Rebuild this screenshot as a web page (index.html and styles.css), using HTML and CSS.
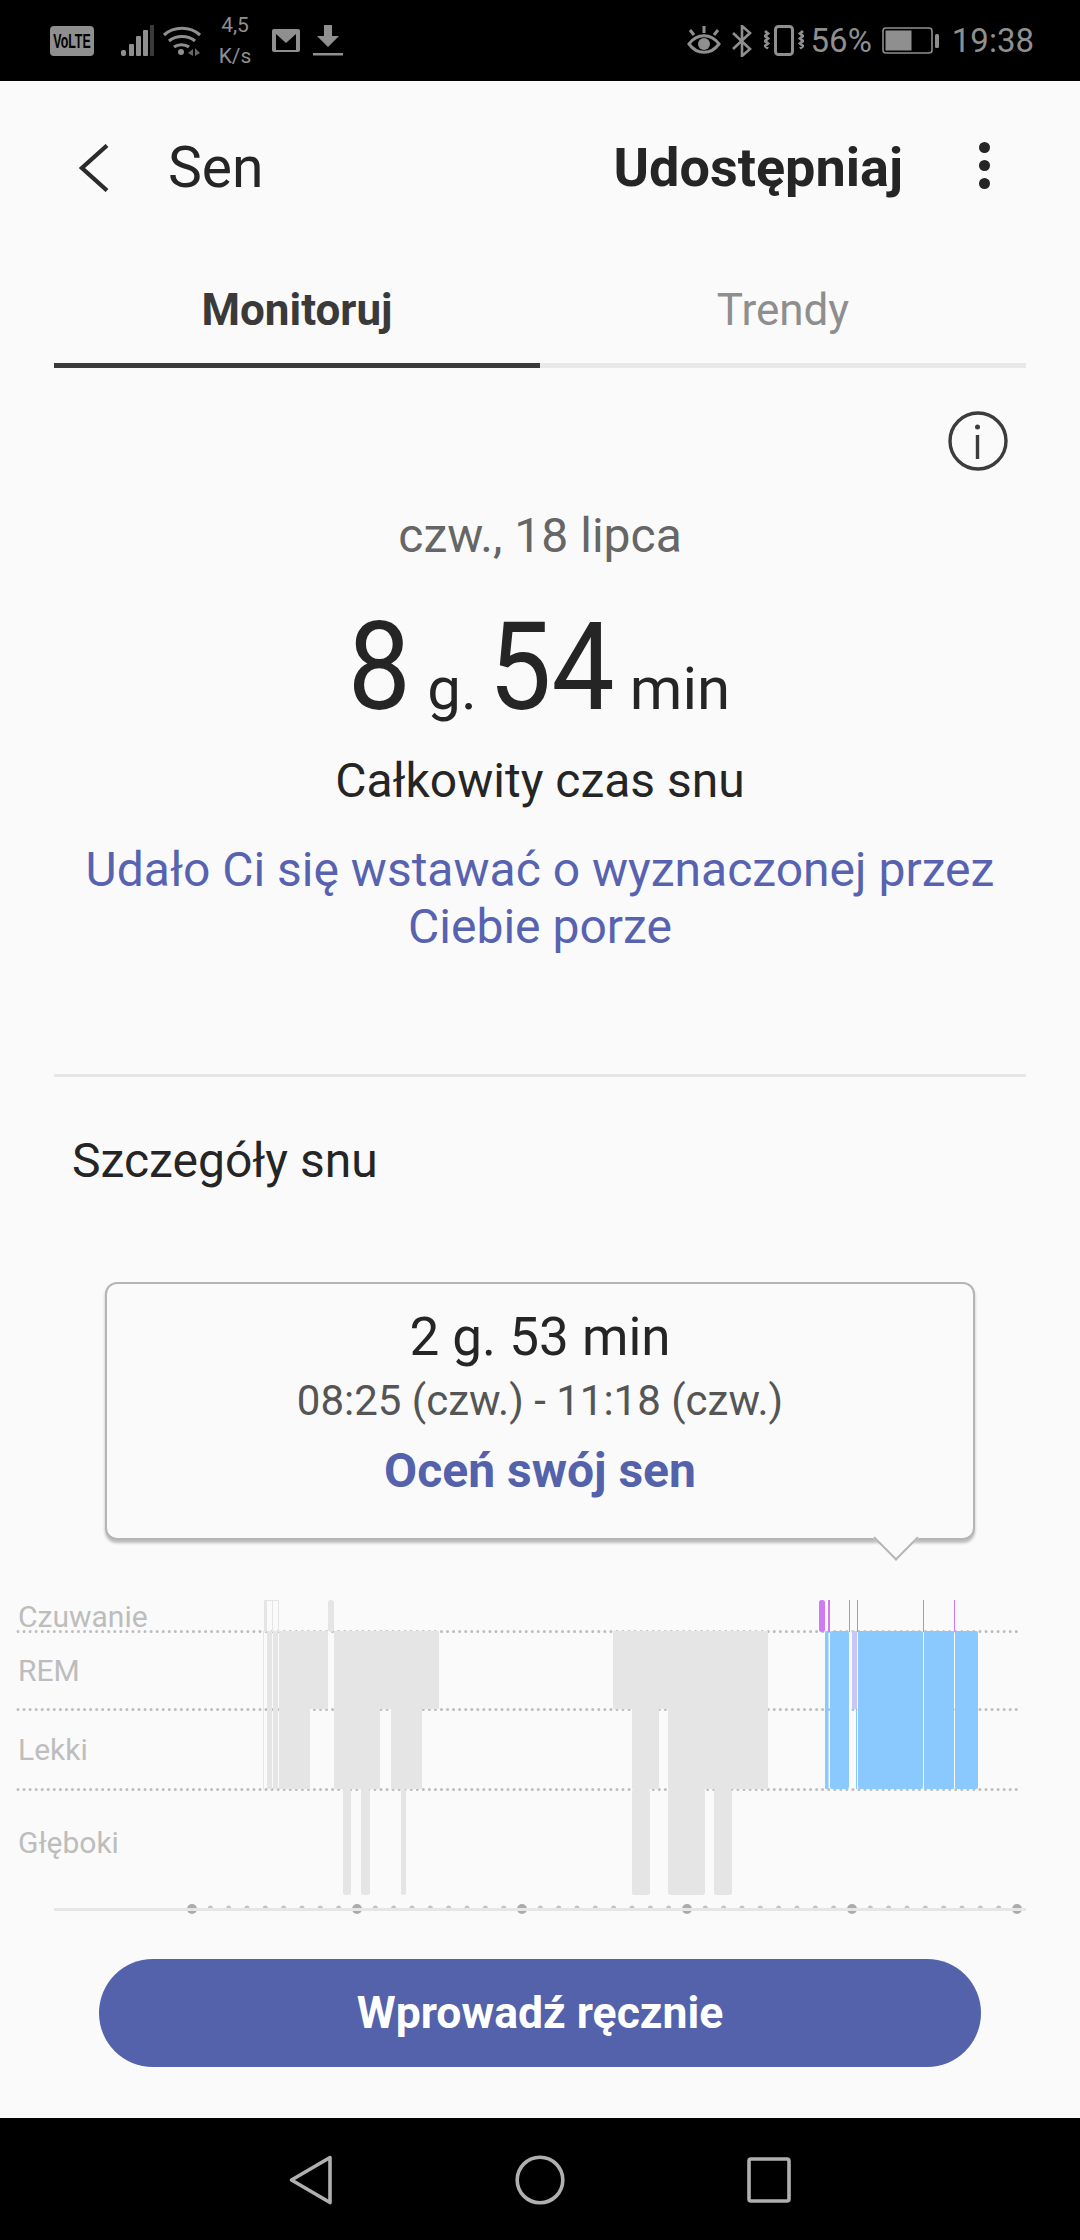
FILE: index.html
```html
<!DOCTYPE html>
<html lang="pl">
<head>
  <meta charset="UTF-8">
  <title>Sen</title>
  <link rel="stylesheet" href="styles.css">
</head>
<body>
  <div class="status-bar">
    <div class="status-left">
      <svg class="ic" width="44" height="30" viewBox="0 0 44 30"><rect width="44" height="30" rx="4" fill="#8f8f8f"/><text x="35.500" y="22" transform="scale(.62 1)" text-anchor="middle" class="volte">VoLTE</text></svg>
      <svg class="ic ic-signal" width="33" height="31" viewBox="0 0 33 31" fill="#8f8f8f"><rect x="0" y="25" width="5" height="6" rx="2"/><rect x="8" y="19" width="5" height="12" rx="1"/><rect x="15" y="11" width="5" height="20" rx="1"/><rect x="22" y="5" width="5" height="26" rx="1"/><rect x="29" y="0" width="4" height="31" fill="#3a3a3a"/></svg>
      <svg class="ic ic-wifi" width="38" height="31" viewBox="0 0 38 31" fill="none" stroke="#8f8f8f" stroke-width="3.2"><path d="M1 10c10-9 26-9 36 0"/><path d="M6 16c7-6 19-6 26 0"/><path d="M11 22c4-3 11-3 15 0"/><circle cx="18" cy="27" r="3" fill="#8f8f8f" stroke="none"/><path d="M25 28l5-4v7zM32 23l5 5-5 3z" fill="#666" stroke="none"/></svg>
      <div class="speed"><span>4,5</span><span>K/s</span></div>
      <svg class="ic ic-mail" width="28" height="23" viewBox="0 0 28 23"><rect width="28" height="23" rx="2" fill="#8f8f8f"/><path d="M4 21V5l10 9 10-9v16" fill="#000"/></svg>
      <svg class="ic ic-down" width="30" height="31" viewBox="0 0 30 31" fill="#8f8f8f"><path d="M11 0h8v11h7L15 22 4 11h7z"/><rect x="0" y="28" width="30" height="2.5"/></svg>
    </div>
    <div class="status-right">
      <svg class="ic" width="34" height="31" viewBox="0 0 34 31" fill="none" stroke="#8f8f8f" stroke-width="3"><path d="M2 19c8-11 22-11 30 0-8 11-22 11-30 0z"/><circle cx="17" cy="19" r="6" fill="#8f8f8f" stroke="none"/><path d="M17 8V1M7 10L3 5M27 10l4-5"/></svg>
      <svg class="ic ic-bt" width="20" height="32" viewBox="0 0 20 32" fill="none" stroke="#8f8f8f" stroke-width="2.6"><path d="M1 8l17 16-8 7V1l8 7L1 24"/></svg>
      <svg class="ic ic-vib" width="40" height="31" viewBox="0 0 40 31" fill="none" stroke="#8f8f8f"><rect x="11.500" y="1.500" width="17" height="28" rx="3" stroke-width="3"/><path d="M1 6l3 2.500-3 2.500 3 2.500-3 2.500 3 2.500-3 2.500 3 2.500M39 6l-3 2.500 3 2.500-3 2.500 3 2.500-3 2.500 3 2.500-3 2.500" stroke-width="2.800"/></svg>
      <span class="status-text pct">56%</span>
      <svg class="ic ic-batt" width="58" height="27" viewBox="0 0 58 27"><rect x="1" y="1" width="49" height="25" rx="3" fill="none" stroke="#8f8f8f" stroke-width="1.6"/><rect x="3.5" y="3.5" width="26" height="20" fill="#8f8f8f"/><rect x="53" y="7" width="4" height="14" rx="1.5" fill="#8f8f8f"/></svg>
      <span class="status-text time">19:38</span>
    </div>
  </div>

  <header class="toolbar">
    <svg class="back" width="30" height="48" viewBox="0 0 30 48" fill="none" stroke="#2b2b2b" stroke-width="4.2"><path d="M28 1.5L3 24l25 22.5"/></svg>
    <span class="toolbar-title">Sen</span>
    <span class="toolbar-share">Udostępniaj</span>
    <div class="more"><i></i><i></i><i></i></div>
  </header>

  <nav class="tabs">
    <div class="tab tab-active">Monitoruj</div>
    <div class="tab">Trendy</div>
  </nav>

  <main class="content">
    <section class="summary">
      <svg class="info" width="60" height="60" viewBox="0 0 60 60" fill="none" stroke="#3c3c3c" stroke-width="3.4"><circle cx="30" cy="30" r="28"/><circle cx="29.500" cy="16" r="2.500" fill="#3c3c3c" stroke="none"/><path d="M29.500 24v24"/></svg>
      <div class="date">czw., 18 lipca</div>
      <div class="total"><b class="hours">8</b> g. <b class="mins">54</b> min</div>
      <div class="total-label">Całkowity czas snu</div>
      <p class="goal">Udało Ci się wstawać o wyznaczonej przez<br>Ciebie porze</p>
    </section>

    <section class="details">
      <h2>Szczegóły snu</h2>
      <div class="popup">
        <div class="popup-time">2 g. 53 min</div>
        <div class="popup-range">08:25 (czw.) - 11:18 (czw.)</div>
        <div class="popup-link">Oceń swój sen</div>
      </div>

      <svg class="chart" width="1080" height="330" viewBox="0 1590 1080 330">
        <g class="chart-label">
          <text x="18" y="1627">Czuwanie</text>
          <text x="18" y="1681">REM</text>
          <text x="18" y="1760">Lekki</text>
          <text x="18" y="1853">Głęboki</text>
        </g>
        <g class="dots">
          <line x1="18" y1="1631.500" x2="1020" y2="1631.500"/>
          <line x1="18" y1="1709.500" x2="1020" y2="1709.500"/>
          <line x1="18" y1="1789.500" x2="1020" y2="1789.500"/>
        </g>
        <g class="seg-grey">
          <rect x="264" y="1600" width="3" height="32" rx="1.500"/>
          <rect x="272" y="1600" width="1" height="32"/>
          <rect x="278" y="1600" width="1" height="32"/>
          <rect x="264" y="1600" width="15" height="1"/>
          <rect x="328" y="1600" width="6" height="32" rx="3"/>
          <rect x="263" y="1631" width="1" height="158"/>
          <rect x="267" y="1631" width="5" height="158"/>
          <rect x="273" y="1631" width="5" height="158"/>
          <path d="M279 1631h49v78h-18v80h-31z"/>
          <path d="M334 1631h105v78h-17v80h-31v-80h-11v80h-46z"/>
          <rect x="343" y="1789" width="8" height="106" rx="2"/>
          <rect x="361" y="1789" width="9" height="106" rx="2"/>
          <rect x="401" y="1789" width="5" height="106" rx="2"/>
          <path d="M613 1631h155v158h-100v-80h-9v80h-27v-80h-19z"/>
          <rect x="632" y="1789" width="18" height="106" rx="2"/>
          <rect x="668" y="1789" width="37" height="106" rx="2"/>
          <rect x="714" y="1789" width="18" height="106" rx="2"/>
        </g>
        <g class="seg-blue">
          <rect x="825" y="1631" width="3.500" height="158" rx="1"/>
          <rect x="830" y="1631" width="19" height="158" rx="2"/>
          <rect x="856" y="1631" width="1" height="158"/>
          <rect x="858" y="1631" width="65" height="158" rx="2"/>
          <rect x="924" y="1631" width="30" height="158" rx="1"/>
          <rect x="955" y="1631" width="23" height="158" rx="2"/>
        </g>
        <rect class="seg-lav" x="852" y="1631" width="5" height="78"/>
        <g class="seg-pink">
          <rect x="819" y="1600" width="6" height="32" rx="2.500"/>
          <rect x="828" y="1600" width="2" height="32"/>
          <rect x="849" y="1600" width="1" height="32"/>
          <rect x="857" y="1600" width="1" height="32"/>
          <rect x="923" y="1600" width="1" height="32"/>
          <rect x="954" y="1600" width="1" height="32"/>
        </g>
        <g class="ticks">
          <line class="ticks-minor" x1="192" y1="1908" x2="1017" y2="1908"/>
          <circle cx="192" cy="1909" r="5"/><circle cx="357" cy="1909" r="5"/><circle cx="522" cy="1909" r="5"/>
          <circle cx="687" cy="1909" r="5"/><circle cx="852" cy="1909" r="5"/><circle cx="1017" cy="1909" r="5"/>
        </g>
        <rect class="axis" x="54" y="1908" width="972" height="3"/>
      </svg>
    </section>

    <div class="action">
      <button class="btn">Wprowadź ręcznie</button>
    </div>
  </main>

  <footer class="nav-bar">
    <svg width="44" height="50" viewBox="0 0 44 50" fill="none" stroke="#b0b0b0" stroke-width="3.600" stroke-linejoin="round"><path d="M41 2.500L2.500 25 41 47.500z"/></svg>
    <svg width="50" height="50" viewBox="0 0 50 50" fill="none" stroke="#b0b0b0" stroke-width="3.600"><circle cx="25" cy="25" r="22.800"/></svg>
    <svg width="44" height="46" viewBox="0 0 44 46" fill="none" stroke="#b0b0b0" stroke-width="3.600"><rect x="2" y="2" width="40" height="42" rx="2"/></svg>
  </footer>
</body>
</html>
```

FILE: styles.css
```css
* {
  box-sizing: border-box;
}
body {
  margin: 0;
  width: 1080px;
  height: 2240px;
  display: flex;
  flex-direction: column;
  overflow: hidden;
  background: #fafafa;
  color: #252525;
  font-family: Roboto, sans-serif;
}
svg {
  display: block;
  flex: none;
}

/* status bar */
.status-bar {
  height: 81px;
  background: #000;
  display: flex;
  justify-content: space-between;
  align-items: center;
  padding: 0 46px 0 50px;
  color: #8f8f8f;
}
.status-left, .status-right {
  display: flex;
  align-items: center;
}
.volte {
  font-family: "Liberation Sans", sans-serif;
  font-size: 20px;
  font-weight: 700;
  fill: #000;
}
.ic-signal { margin-left: 27px; }
.ic-wifi { margin-left: 9px; }
.speed {
  width: 44px;
  margin-left: 12px;
  display: flex;
  flex-direction: column;
  align-items: center;
  font-size: 21px;
  line-height: 31px;
}
.ic-mail { margin-left: 15px; }
.ic-down { margin-left: 13px; }
.ic-bt { margin-left: 11px; }
.ic-vib { margin-left: 12px; }
.status-text {
  font-size: 33px;
  line-height: 40px;
}
.pct { margin-left: 7px; }
.ic-batt { margin-left: 10px; }
.time { margin-left: 12px; }

/* toolbar */
.toolbar {
  height: 173px;
  display: flex;
  align-items: center;
  padding-left: 79px;
}
.toolbar-title {
  margin-left: 59px;
  font-size: 57px;
}
.toolbar-share {
  margin-left: auto;
  font-size: 54px;
  font-weight: 700;
}
.more {
  width: 11px;
  margin: 0 90px 0 76px;
  display: flex;
  flex-direction: column;
  gap: 7px;
  padding-bottom: 4px;
}
.more i {
  width: 11px;
  height: 11px;
  border-radius: 50%;
  background: #252525;
}

/* tabs */
.tabs {
  height: 114px;
  margin: 0 54px;
  display: flex;
}
.tab {
  flex: 1;
  display: flex;
  align-items: center;
  justify-content: center;
  border-bottom: 5px solid #e8e8e8;
  padding-top: 2px;
  font-size: 44px;
  color: #8e8e8e;
}
.tab-active {
  border-bottom-color: #3a3a3a;
  font-weight: 700;
  color: #3a3a3a;
}

.content {
  flex: 1;
  display: flex;
  flex-direction: column;
}

/* summary */
.summary {
  position: relative;
  height: 709px;
  margin: 0 54px;
  border-bottom: 3px solid #e6e6e6;
  padding-top: 140px;
  text-align: center;
}
.info {
  position: absolute;
  top: 43px;
  right: 18px;
}
.date {
  font-size: 48px;
  line-height: 56px;
  color: #666;
}
.total {
  margin-top: 39px;
  font-size: 60px;
  line-height: 130px;
}
/* the digits on the phone are narrower than Roboto */
.total b {
  display: inline-block;
  font-size: 122px;
  font-weight: 400;
  transform: scaleX(0.92);
}
.hours { margin: 0 -1px 0 -5px; }
.mins { margin: 0 -5px 0 -9px; }
.total-label {
  margin-top: -1px;
  font-size: 48px;
  line-height: 56px;
}
.goal {
  margin: 32px 0 0;
  font-size: 48px;
  line-height: 57px;
  color: #5763b0;
}

/* details */
.details {
  flex: 1;
}
.details h2 {
  margin: 0;
  height: 205px;
  padding: 54px 0 0 72px;
  font-size: 48px;
  line-height: 60px;
  font-weight: 400;
}
.popup {
  position: relative;
  width: 870px;
  height: 258px;
  margin-left: 105px;
  padding-top: 22px;
  border: 2px solid #b5b5b5;
  border-radius: 12px;
  box-shadow: 0 3px 3px rgba(0, 0, 0, 0.25);
  background: #fafafa;
  text-align: center;
}
.popup::after {
  content: "";
  position: absolute;
  left: 773px;
  bottom: -16px;
  width: 30px;
  height: 30px;
  transform: rotate(45deg);
  background: #fafafa;
  border-right: 2px solid #b5b5b5;
  border-bottom: 2px solid #b5b5b5;
}
.popup-time {
  font-size: 53px;
  line-height: 62px;
}
.popup-range {
  font-size: 42px;
  line-height: 50px;
  color: #555;
  margin-top: 8px;
}
.popup-link {
  font-size: 48px;
  line-height: 60px;
  margin-top: 15px;
  font-weight: 700;
  color: #5362ab;
}

/* chart */
.chart {
  margin-top: 50px;
}
.chart-label {
  font-size: 30px;
  fill: #bdbdbd;
}
.dots line {
  stroke: #bdbdbd;
  stroke-width: 3;
  stroke-linecap: round;
  stroke-dasharray: 0 6.05;
}
.seg-grey { fill: #e5e5e5; }
.seg-blue { fill: #8ac9fd; }
.seg-lav { fill: #c9c6f7; }
.seg-pink { fill: #d07cf0; }
.ticks { fill: #ababab; }
.ticks-minor {
  stroke: #c4c4c4;
  stroke-width: 5;
  stroke-linecap: round;
  stroke-dasharray: 0 18.333;
}
.axis { fill: #e6e6e6; }

/* button */
.action {
  height: 198px;
  padding: 39px 99px 0;
}
.btn {
  display: block;
  width: 100%;
  height: 108px;
  border: 0;
  border-radius: 54px;
  background: #5362ab;
  color: #fff;
  font-family: Roboto, sans-serif;
  font-size: 44.500px;
  font-weight: 700;
}

/* nav bar */
.nav-bar {
  height: 122px;
  background: #000;
  display: flex;
  align-items: center;
  justify-content: center;
  gap: 182px;
  padding-top: 1px;
}
```
